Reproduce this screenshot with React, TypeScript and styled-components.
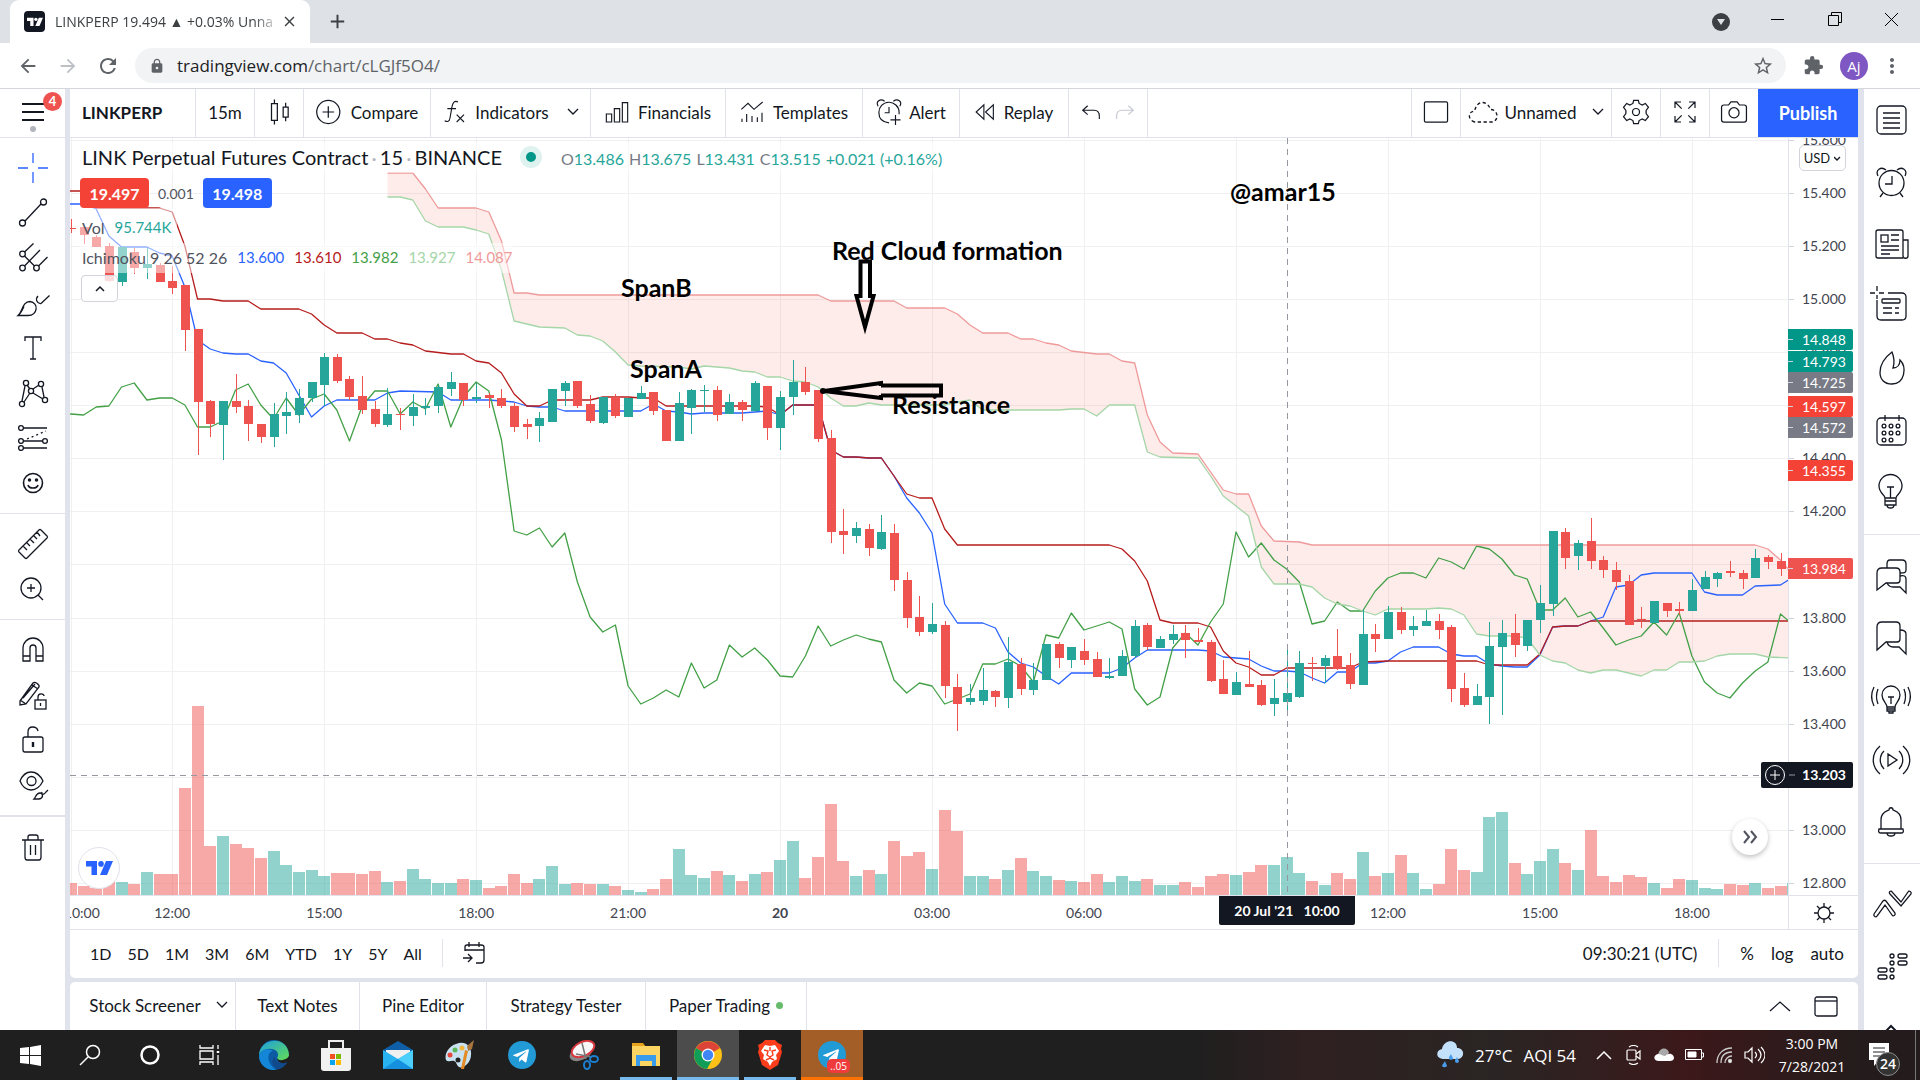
import React from 'react'
import styled, { createGlobalStyle } from 'styled-components'
import {
  MdAdd,
  MdArrowBack,
  MdArrowForward,
  MdClose,
  MdExtension,
  MdLock,
  MdMoreVert,
  MdRefresh,
  MdStarBorder,
} from 'react-icons/md'
import { FaTelegramPlane } from 'react-icons/fa'

const UI_FONT = "Lato, 'Open Sans', sans-serif"
const SYSTEM_FONT = "'Open Sans', 'Noto Sans', sans-serif"

const GlobalStyle = createGlobalStyle`
  * {
    box-sizing: border-box;
  }
  body {
    margin: 0;
    overflow: hidden;
    font-family: ${UI_FONT};
    color: #131722;
  }
  button {
    font: inherit;
    color: inherit;
    background: none;
    border: none;
    padding: 0;
    cursor: pointer;
  }
  svg {
    display: block;
    flex: none;
  }
`

/* ---------- chart data ---------- */

// [up, high, body top, body bottom, low, volume top], one row per 15 minutes
type Candle = [number, number, number, number, number, number]

const FIRST = -8
const CANDLES: Candle[] = [
  [0, 219, 228, 229, 233, 883],
  [0, 227, 227, 235, 244, 886],
  [0, 235, 237, 247, 247, 888],
  [0, 243, 246, 281, 282, 881],
  [1, 246, 247, 282, 286, 882],
  [0, 248, 252, 268, 274, 884],
  [1, 248, 264, 268, 279, 872],
  [0, 263, 265, 282, 282, 874],
  [0, 266, 281, 288, 294, 874],
  [0, 285, 285, 330, 351, 788],
  [0, 329, 329, 402, 455, 706],
  [0, 400, 401, 424, 437, 846],
  [1, 401, 401, 425, 460, 836],
  [0, 374, 401, 407, 413, 844],
  [0, 400, 406, 424, 441, 848],
  [0, 424, 424, 437, 443, 858],
  [1, 403, 414, 437, 447, 851],
  [1, 392, 412, 416, 434, 865],
  [1, 389, 398, 415, 423, 872],
  [1, 382, 382, 398, 402, 870],
  [1, 353, 357, 385, 406, 876],
  [0, 354, 357, 381, 383, 873],
  [0, 376, 379, 397, 400, 873],
  [0, 376, 396, 410, 414, 874],
  [0, 401, 409, 424, 427, 871],
  [1, 388, 414, 425, 427, 882],
  [0, 408, 414, 415, 430, 881],
  [1, 394, 407, 416, 426, 869],
  [1, 398, 406, 408, 415, 879],
  [1, 385, 387, 406, 413, 883],
  [1, 372, 382, 389, 396, 883],
  [0, 383, 383, 400, 406, 879],
  [1, 383, 397, 399, 403, 880],
  [0, 393, 395, 398, 408, 888],
  [0, 389, 398, 406, 408, 886],
  [0, 403, 406, 427, 432, 874],
  [0, 419, 424, 427, 439, 883],
  [1, 412, 418, 426, 442, 879],
  [1, 389, 389, 422, 422, 866],
  [1, 381, 383, 391, 406, 884],
  [0, 381, 381, 406, 408, 883],
  [0, 395, 404, 421, 423, 884],
  [1, 397, 397, 423, 424, 884],
  [0, 394, 397, 416, 418, 886],
  [1, 398, 398, 417, 417, 890],
  [1, 386, 393, 399, 399, 892],
  [0, 392, 392, 411, 415, 889],
  [0, 410, 410, 441, 441, 879],
  [1, 392, 403, 441, 441, 849],
  [1, 389, 390, 408, 434, 875],
  [1, 385, 390, 391, 412, 878],
  [0, 386, 390, 415, 421, 871],
  [1, 394, 402, 414, 414, 875],
  [0, 400, 402, 410, 421, 881],
  [1, 381, 383, 411, 412, 874],
  [0, 386, 386, 428, 440, 872],
  [1, 391, 397, 428, 450, 860],
  [1, 360, 382, 397, 415, 841],
  [0, 367, 382, 392, 395, 878],
  [0, 390, 390, 439, 442, 857],
  [0, 430, 438, 532, 543, 804],
  [0, 509, 531, 535, 554, 861],
  [1, 522, 528, 536, 543, 876],
  [0, 524, 529, 548, 556, 870],
  [1, 515, 532, 549, 550, 874],
  [0, 524, 533, 580, 591, 841],
  [0, 572, 580, 618, 628, 856],
  [0, 596, 617, 632, 636, 852],
  [1, 603, 624, 632, 634, 869],
  [0, 621, 625, 686, 698, 810],
  [0, 674, 687, 704, 731, 831],
  [1, 684, 698, 702, 705, 876],
  [1, 668, 690, 701, 705, 876],
  [0, 690, 691, 697, 707, 879],
  [1, 637, 662, 698, 708, 870],
  [0, 658, 664, 689, 695, 858],
  [1, 663, 680, 690, 695, 871],
  [1, 644, 644, 680, 680, 876],
  [0, 642, 644, 658, 668, 880],
  [1, 647, 647, 660, 668, 881],
  [0, 639, 651, 660, 665, 882],
  [0, 652, 659, 677, 677, 874],
  [1, 658, 676, 678, 679, 882],
  [1, 650, 656, 676, 676, 876],
  [1, 620, 626, 656, 658, 881],
  [0, 623, 625, 647, 650, 879],
  [1, 636, 639, 648, 648, 885],
  [1, 625, 634, 640, 644, 885],
  [0, 625, 633, 640, 658, 882],
  [0, 628, 640, 642, 642, 887],
  [0, 640, 642, 681, 682, 876],
  [0, 660, 679, 694, 694, 874],
  [1, 672, 682, 695, 695, 875],
  [0, 651, 684, 687, 687, 872],
  [0, 680, 685, 705, 706, 865],
  [1, 679, 698, 704, 716, 865],
  [1, 650, 693, 702, 716, 857],
  [1, 651, 663, 697, 698, 873],
  [0, 657, 663, 664, 681, 881],
  [1, 655, 658, 666, 683, 885],
  [0, 629, 656, 669, 670, 873],
  [0, 653, 665, 684, 689, 879],
  [1, 609, 634, 685, 685, 852],
  [0, 624, 634, 639, 652, 876],
  [1, 606, 612, 639, 639, 873],
  [0, 607, 612, 630, 634, 855],
  [1, 616, 626, 630, 636, 873],
  [1, 610, 621, 626, 626, 889],
  [0, 614, 621, 630, 639, 884],
  [0, 625, 627, 689, 702, 849],
  [0, 673, 688, 705, 707, 870],
  [1, 684, 696, 705, 705, 872],
  [1, 622, 646, 697, 724, 817],
  [1, 620, 633, 647, 715, 812],
  [0, 614, 633, 645, 657, 863],
  [1, 620, 620, 646, 651, 874],
  [1, 585, 603, 620, 633, 861],
  [1, 531, 531, 604, 616, 849],
  [0, 528, 532, 558, 569, 863],
  [1, 540, 543, 556, 570, 870],
  [0, 518, 541, 561, 569, 830],
  [0, 556, 560, 570, 578, 876],
  [0, 562, 570, 582, 590, 882],
  [0, 575, 581, 625, 625, 875],
  [0, 607, 619, 620, 628, 877],
  [1, 601, 601, 623, 623, 883],
  [0, 603, 603, 611, 617, 888],
  [0, 602, 609, 611, 615, 879],
  [1, 579, 590, 611, 611, 880],
  [1, 571, 577, 589, 589, 888],
  [1, 572, 573, 579, 587, 889],
  [0, 561, 571, 573, 577, 884],
  [0, 570, 573, 579, 589, 885],
  [1, 549, 558, 578, 578, 883],
  [0, 555, 557, 562, 569, 888],
  [0, 553, 561, 569, 576, 886],
]

// indicator lines as "index,y" pairs
const LAGGING =
  '-9,415 -8,414 -7,415 -6,407 -5,406 -4,387 -3,383 -2,400 -1,398 0,398 1,405 2,427 3,427 4,421 5,390 6,384 7,405 8,419 9,398 10,415 11,399 12,394 13,410 14,441 15,406 16,391 17,391 18,414 19,402 20,409 21,384 22,427 23,397 24,382 25,391 26,440 27,531 28,535 29,528 30,547 31,533 32,582 33,617 34,632 35,625 36,686 37,704 38,698 39,690 40,697 41,663 42,688 43,680 44,645 45,657 46,648 47,660 48,676 49,677 50,656 51,626 52,646 53,640 54,635 55,639 56,642 57,680 58,693 59,683 60,686 61,704 62,699 63,694 64,664 65,664 66,659 67,666 68,682 69,635 70,638 71,613 72,630 73,626 74,622 75,629 76,689 77,705 78,697 79,648 80,633 81,645 82,622 83,604 84,532 85,557 86,543 87,560 88,569 89,582 90,624 91,621 92,602 93,611 94,611 95,591 96,578 97,573 98,573 99,578 100,558 101,562 102,569 103,546 104,549 105,559 106,575 107,579 108,610 109,610 110,598 111,617 112,612 113,628 114,645 115,640 116,636 117,622 118,635 119,613 120,656 121,682 122,693 123,698 124,683 125,671 126,662 127,614 128,625'
const CONVERSION =
  '-9,204 -7,204 -6,209 -5,236 -4,247 -2,247 -1,253 0,256 1,287 2,340 3,349 4,353 5,354 6,354 7,361 8,363 9,373 10,395 11,417 12,406 13,400 16,400 17,393 18,391 21,392 22,400 25,400 26,401 27,402 28,406 29,407 30,407 31,411 37,411 38,404 39,411 40,412 41,414 42,413 45,413 46,412 47,411 48,415 49,405 51,405 52,450 53,457 54,457 55,458 56,458 57,476 58,498 59,513 60,533 61,604 62,623 64,623 65,628 66,652 67,663 68,667 69,676 70,684 71,673 74,673 75,668 76,658 77,650 81,650 82,651 83,657 84,658 85,659 86,666 87,671 88,671 89,672 90,678 91,683 92,672 93,672 94,663 95,663 96,661 97,652 98,647 100,647 101,654 102,656 103,656 104,664 105,666 106,667 107,667 108,655 109,627 110,626 111,626 112,621 113,617 114,587 115,585 116,575 117,573 120,573 121,592 122,595 124,595 125,586 127,585 128,577'
const BASE =
  '-9,191 -7,191 -6,208 -1,208 0,212 1,246 2,299 3,299 4,301 6,301 7,309 10,309 11,314 12,325 13,333 15,333 16,339 17,339 18,343 19,345 20,351 22,354 23,354 24,361 25,363 26,373 27,394 28,406 29,406 30,400 33,400 34,397 36,397 37,398 38,398 39,406 46,406 47,407 48,415 49,405 51,405 52,450 53,457 54,457 55,458 56,458 57,476 58,494 59,498 60,498 61,529 62,545 74,545 75,549 76,561 77,581 78,620 79,623 81,623 82,627 83,651 84,663 85,667 86,675 87,675 88,668 93,668 94,662 96,661 103,661 104,665 107,665 108,654 109,627 110,626 111,626 112,621 128,621'
const SPAN_B =
  '17,173 19,173 20,189 21,208 24,208 25,212 26,241 27,293 28,293 29,295 51,295 52,301 57,301 58,308 61,308 62,314 63,325 64,333 66,333 67,339 68,339 69,343 70,345 71,351 73,354 74,354 75,361 76,363 77,415 78,442 79,453 81,454 82,472 83,490 84,494 85,494 86,526 87,541 89,542 90,545 125,545 126,549 127,560 128,575'
const SPAN_A =
  '17,197 18,197 19,200 20,221 21,227 23,227 24,230 25,234 26,270 27,321 28,324 29,327 31,328 32,335 33,336 34,341 35,352 36,365 37,366 40,367 41,369 42,366 44,368 45,371 46,372 47,377 48,377 49,381 50,382 51,387 52,398 53,406 54,406 55,403 56,405 61,405 62,402 63,400 64,410 70,410 71,409 72,409 73,416 74,405 76,405 77,452 78,457 81,458 82,476 83,496 84,506 85,516 86,567 87,584 89,584 90,587 91,598 92,604 93,606 94,611 95,615 96,609 99,609 100,608 101,609 102,615 103,634 104,636 106,636 107,638 108,655 109,661 110,663 111,670 112,673 113,670 114,670 115,673 116,676 117,670 118,670 119,662 120,662 121,661 122,656 123,654 125,654 126,657 128,658'

const PLOT = { left: 70, top: 138, width: 1718, height: 757 }
const barX = (i: number) => 172.2 + 12.664 * i
const priceY = (p: number) => 193.2 + (15.4 - p) * 265.2
const topPct = (y: number) => `${((y - PLOT.top) / PLOT.height) * 100}%`
const leftPct = (x: number) => `${((x - PLOT.left) / PLOT.width) * 100}%`

const toPoints = (s: string) =>
  s
    .split(' ')
    .map((pair) => {
      const [i, y] = pair.split(',').map(Number)
      return `${barX(i).toFixed(1)},${y}`
    })
    .join(' ')

const PRICES = Array.from({ length: 15 }, (_, i) => (15.6 - i * 0.2).toFixed(3))
// prices whose label sits behind a tag
const COVERED = ['14.600', '14.000', '13.200']
const TIMES: [number, string][] = [
  [-8, '10:00'],
  [0, '12:00'],
  [12, '15:00'],
  [24, '18:00'],
  [36, '21:00'],
  [48, '20'],
  [60, '03:00'],
  [72, '06:00'],
  [84, ''],
  [96, '12:00'],
  [108, '15:00'],
  [120, '18:00'],
]
const TAGS: [string, number, string][] = [
  ['14.848', 339, '#009688'],
  ['14.793', 361, '#009688'],
  ['14.725', 382, '#787b86'],
  ['14.597', 406, '#f44336'],
  ['14.572', 427, '#787b86'],
  ['14.355', 470, '#f44336'],
  ['13.984', 568, '#ef5350'],
]

/* ---------- icons ---------- */

const Icon = ({ children, size = 36, color = '#131722', width = 1.3 }: any) => (
  <svg
    width={size}
    height={size}
    viewBox="0 0 36 36"
    fill="none"
    stroke={color}
    strokeWidth={width}
    aria-hidden="true"
  >
    {children}
  </svg>
)

const Chevron = () => (
  <svg width="12" height="8" viewBox="0 0 12 8" fill="none" stroke="#131722" strokeWidth="1.3">
    <path d="M1 1l5 5 5-5" />
  </svg>
)

const TVMark = ({ color, w = 27 }: { color: string; w?: number }) => (
  <svg width={w} height={w * 0.6} viewBox="0 0 27 16" fill={color}>
    <path d="M0 1h11v14H5.5V6.5H0z" />
    <circle cx="15" cy="3.8" r="2.8" />
    <path d="M20 1h7l-6 14h-7z" />
  </svg>
)

type IconSet = Record<string, React.ReactNode>

const DRAW_TOOLS: IconSet = {
  Crosshair: <path stroke="#2962ff" d="M3 18h10M23 18h10M18 3v10M18 22v11" />,
  'Trend line': (
    <>
      <circle cx="7.5" cy="28" r="3" />
      <circle cx="28.5" cy="7" r="3" />
      <path d="M10 26L26 9" />
    </>
  ),
  Pitchfork: (
    <>
      <circle cx="7.5" cy="14" r="2.8" />
      <circle cx="7.5" cy="28" r="2.8" />
      <circle cx="21.5" cy="28" r="2.8" />
      <path d="M9.500 12l9-8.500M9.500 26L25 10M23.500 26l9-9M9.500 16l10 10" />
    </>
  ),
  Brush: (
    <>
      <path d="M3 30.500c5-4 4-14 12-14 9 1 8 14-2 14zM3 30.500c3-2 4-5 6-9" />
      <path d="M23 11c-3 3-1 8 3 7.500M26 18.500l8.500-8" />
    </>
  ),
  Text: <path d="M18 7v22M10 11V7h16v4M15 29h6" />,
  Patterns: (
    <>
      <circle cx="11" cy="8" r="2.6" />
      <circle cx="26" cy="9" r="2.6" />
      <circle cx="16" cy="16" r="2.6" />
      <circle cx="7" cy="29" r="2.6" />
      <circle cx="30" cy="25" r="2.6" />
      <path d="M10 11L7 26M12 10l3 4M18 14l6-4M27 12l2 10M15 18L9 27M18 18l10 6" />
    </>
  ),
  Forecast: (
    <>
      <circle cx="6" cy="8" r="2.4" />
      <circle cx="6" cy="21" r="2.4" />
      <circle cx="30" cy="21" r="2.4" />
      <circle cx="6" cy="28" r="2.4" />
      <path d="M9 8h23M9 21h18M9 28h23" />
      <path d="M12 19L31 11" strokeDasharray="2 3" />
    </>
  ),
  Icons: (
    <>
      <circle cx="18" cy="18" r="9.5" strokeWidth="1.6" />
      <circle cx="14.5" cy="15" r="1.1" fill="#131722" />
      <circle cx="21.5" cy="15" r="1.1" fill="#131722" />
      <path d="M13 20c1 4 9 4 10 0" strokeWidth="1.6" />
    </>
  ),
}

const MEASURE_TOOLS: IconSet = {
  Measure: (
    <path d="M26 4l6 6c1 1 1 1 0 2L12 32c-1 1-1 1-2 0l-6-6c-1-1-1-1 0-2L24 4c1-1 1-1 2 0zM8 20l4 4M12 17l3 3M15 13l4 4M19 10l3 3M22 6l3 4" />
  ),
  'Zoom in': (
    <>
      <circle cx="16" cy="17" r="10" />
      <path d="M23 24l5 5M16 13v8M12 17h8" />
    </>
  ),
}

const LOCK_TOOLS: IconSet = {
  Magnet: <path d="M8 29V16a10 10 0 0 1 20 0v13h-7V16a3 3 0 0 0-6 0v13zM8 24h7M21 24h7" />,
  'Stay in drawing mode': (
    <>
      <path d="M5 24L18 6c2-2 7 2 6 4L11 27l-6 1zM5 23l6 4M8 21L20 7M17 8l6 4" />
      <rect x="20" y="23" width="11" height="9" />
      <path d="M23 23v-3c0-4 6-4 6-1M25.5 26v3" />
    </>
  ),
  'Lock all': (
    <>
      <rect x="8" y="15" width="20" height="15" rx="2" />
      <path d="M13 15v-5c0-7 9-6 10-1" />
      <path d="M18 20v5" strokeWidth="2.4" />
    </>
  ),
  'Hide all': (
    <>
      <path d="M5 14c5-12 17-12 23 0-6 12-18 12-23 0z" />
      <circle cx="16.5" cy="14" r="4.5" />
      <path d="M19 32c2-2 2-6 6-6 3 0 4 5-1 6zM27 25c-1 3 2 3 4 0l2-2" />
    </>
  ),
}

const TRASH = (
  <path d="M7 11h22M10 11v17c0 2 1 3 2 3h12c1 0 2-1 2-3V11M13 11V8c0-1 1-2 2-2h6c1 0 2 1 2 2v3M15.5 16v10M20.5 16v10" />
)

const BULB = (
  <>
    <path d="M14 27c0-4-5-6-5-12a9 9 0 0 1 18 0c0 6-5 8-5 12zM14 27v4h8v-4M14 29h8M16 31v2h4v-2" />
    <path d="M15 17h6M18 17v7" />
  </>
)

const SIDE_TOP: IconSet = {
  Watchlist: (
    <>
      <rect x="4" y="4" width="29" height="28" rx="4" />
      <path d="M10 11h17M10 16h17M10 21h17M10 26h17" />
    </>
  ),
  Alerts: (
    <>
      <circle cx="18.5" cy="19" r="12.5" />
      <path d="M19 12v8h-7M10 29l-3 4M27 29l3 4M5 12c-3-6 3-10 8-6M32 12c3-6-3-10-8-6" />
    </>
  ),
  News: (
    <>
      <path d="M30 32H5c-1 0-2-1-2-2V6c0-1 1-2 2-2h23c1 0 2 1 2 2v24c0 3 5 3 5 0V14h-5" />
      <rect x="8" y="9" width="7" height="7" />
      <path d="M18 9h8M18 14h8M8 20h18M8 24h18M8 28h9" />
    </>
  ),
  'Data window': (
    <>
      <path d="M4 12v16c0 3 2 4 4 4h21c2 0 4-1 4-4V9c0-3-2-4-4-4H15M4-2v5M4 7v4M-3 5h5M6 5h5" />
      <rect x="9" y="11" width="18" height="4" rx="1" />
      <path d="M10 20h9M22 20h4M10 25h9M22 25h4" />
    </>
  ),
  Hotlists: (
    <path d="M19 2c2 5 3 10 1 16 4 0 7-3 7-8 7 7 5 24-8 24C3 34 3 14 19 2z" />
  ),
  Calendar: (
    <>
      <rect x="4" y="6" width="29" height="27" rx="4" />
      <path d="M12 3v6M26 3v6" />
      {[14, 21, 28].map((y) =>
        [11, 18, 25].map((x) =>
          x === 25 && y === 28 ? null : <circle key={`${x}${y}`} cx={x} cy={y} r="1.9" />,
        ),
      )}
    </>
  ),
  Ideas: (
    <>
      <path d="M12 24c0-3-6-5-6-12a11 11 0 0 1 23 0c0 7-6 9-6 12zM12 24v7h11v-7M12 27h11M14 31c0 4 7 4 7 0" />
      <path d="M14 13h7M17.5 13v11" />
    </>
  ),
}

const SIDE_MIDDLE: IconSet = {
  'Public chats': (
    <>
      <path d="M9 12h14c3 0 4 1 4 4v8c0 2-1 3-3 3H13l-9 7V17c0-3 2-5 5-5z" />
      <path d="M14 12V8c0-3 1-4 3-4h12c3 0 4 2 4 4v6c0 3-2 3-6 3M27 20c4-1 6 0 6 3v14l-6-6h-7c-3 0-5-2-6-4" />
    </>
  ),
  'Private chats': (
    <>
      <path d="M9 4h14c3 0 4 2 4 4v13c0 2-1 3-3 3H13l-9 8V9c0-3 2-5 5-5z" />
      <path d="M27 12c4 0 6 1 6 4v20l-7-7h-6c-3 0-5-2-6-5" />
    </>
  ),
  'Ideas stream': (
    <>
      {BULB}
      <path d="M5 9c-2 5-2 10 0 15M1 7c-3 6-3 13 0 19M31 9c2 5 2 10 0 15M35 7c3 6 3 13 0 19" />
    </>
  ),
  Streams: (
    <path d="M15 12v12l9-6zM11 9c-5 5-5 13 0 18M7 4c-9 8-9 20 0 28M26 9c5 5 5 13 0 18M30 4c9 8 9 20 0 28" />
  ),
  Notifications: (
    <path d="M8 25V16c0-8 6-9 8-10 0-3 4-3 4 0 2 1 8 2 8 10v9M6 25h24c1 3 0 4-2 4H8c-2 0-3-1-2-4zM14 29c0 4 8 4 8 0" />
  ),
}

const SIDE_BOTTOM: IconSet = {
  'Order panel': (
    <path d="M1 28l9-13c1-1 2-1 3 0l9 12c1 2-2 4-3 2l-7-10-8 11c-1 2-4 0-3-2zM17 8c-2-2 1-4 2-2l9 10 7-10c1-2 4 0 3 2L28 20z" />
  ),
  DOM: (
    <>
      {[8, 15, 22, 29].map((y) => (
        <circle key={y} cx="19" cy={y} r="2" />
      ))}
      <rect x="25" y="6" width="9" height="4" rx="2" />
      <rect x="25" y="13" width="9" height="4" rx="2" />
      <rect x="5" y="20" width="9" height="4" rx="2" />
      <rect x="5" y="27" width="9" height="4" rx="2" />
    </>
  ),
  More: <path d="M12 22l6-6 6 6" strokeWidth="2" />,
}

/* ---------- browser chrome ---------- */

const Page = styled.div`
  display: flex;
  flex-direction: column;
  height: 100vh;
`

const TabStrip = styled.header`
  display: flex;
  height: 43px;
  padding-left: 10px;
  background: #dee1e6;
  font-family: ${SYSTEM_FONT};
`

const Tab = styled.div`
  display: flex;
  align-items: center;
  width: 300px;
  padding: 0 12px 0 14px;
  border-radius: 9px 9px 0 0;
  background: #fff;
  color: #3c4043;
`

const Favicon = styled.span`
  display: grid;
  place-items: center;
  width: 21px;
  height: 21px;
  margin-right: 10px;
  border-radius: 4px;
  background: #131722;
`

const TabTitle = styled.span`
  flex: 1;
  overflow: hidden;
  white-space: nowrap;
  font-size: 14px;
  -webkit-mask-image: linear-gradient(90deg, #000 88%, transparent);
`

const NewTab = styled.button`
  width: 55px;
  display: grid;
  place-items: center;
  color: #3c4043;
`

const WindowButtons = styled.div`
  display: flex;
  margin-left: auto;
  align-items: flex-start;
`

const WindowButton = styled.button`
  display: grid;
  place-items: center;
  width: 57px;
  height: 38px;
`

const AddressBar = styled.div`
  display: flex;
  align-items: center;
  height: 46px;
  padding: 0 16px;
  border-bottom: 1px solid #d5d7dc;
  background: #fff;
  color: #5f6368;
`

const NavButton = styled.button<{ $w: number; $faded?: boolean }>`
  display: grid;
  place-items: center;
  width: ${(p) => p.$w}px;
  height: 35px;
  color: ${(p) => (p.$faded ? '#bdc1c6' : '#5f6368')};
`

const Omnibox = styled.div`
  display: flex;
  flex: 1;
  align-items: center;
  gap: 12px;
  height: 35px;
  margin: 0 10px 0 15px;
  padding: 0 12px 0 14px;
  border-radius: 18px;
  background: #f1f3f4;
`

const UrlField = styled.div`
  flex: 1;
  font-family: ${SYSTEM_FONT};
  font-size: 17px;

  b {
    font-weight: 400;
    color: #202124;
  }
`

const Avatar = styled.button`
  width: 28px;
  height: 28px;
  margin: 0 12px 0 10px;
  border-radius: 50%;
  background: #7e57c2;
  font-family: ${SYSTEM_FONT};
  font-size: 15px;
  color: #fff;
`

/* ---------- workspace ---------- */

const Workspace = styled.div`
  display: flex;
  flex: 1;
  min-height: 0;
  background: #e0e3eb;
`

const LeftBar = styled.nav`
  display: flex;
  flex-direction: column;
  width: 65px;
  margin-right: 5px;
  background: #fff;
`

const MenuButton = styled.button`
  position: relative;
  display: grid;
  place-items: center;
  height: 49px;
  border-bottom: 1px solid #e0e3eb;
`

const Badge = styled.span`
  position: absolute;
  top: 3px;
  right: 3px;
  width: 19px;
  height: 19px;
  border-radius: 50%;
  background: #ef5350;
  font-size: 13px;
  line-height: 19px;
  font-weight: 700;
  color: #fff;
`

const ToolGroup = styled.div`
  display: flex;
  flex-direction: column;
  padding: 7px 0 8px;
  border-bottom: 1px solid #e0e3eb;

  &:last-child {
    flex: 1;
    border-top: 1px solid #e0e3eb;
    border-bottom: none;
  }
`

const ToolButton = styled.button`
  display: grid;
  place-items: center;
  height: 45px;
`

const Center = styled.main`
  display: flex;
  flex: 1;
  flex-direction: column;
  min-width: 0;
`

const TopBar = styled.div`
  display: flex;
  height: 49px;
  border-bottom: 1px solid #e0e3eb;
  background: #fff;
`

const TopButton = styled.button<{ $w: number; $gap?: number }>`
  display: flex;
  align-items: center;
  justify-content: center;
  gap: ${(p) => p.$gap ?? 9}px;
  width: ${(p) => p.$w}px;
  padding-bottom: 2px;
  border-right: 1px solid #e0e3eb;
  font-size: 17px;
  white-space: nowrap;
`

const SymbolButton = styled(TopButton)`
  justify-content: flex-start;
  padding-left: 12px;
  font-weight: 700;
`

const SnapshotButton = styled(TopButton)`
  border-right: none;
`

const DropArrow = styled.span`
  margin-left: 9px;
`

const TopSpacer = styled.div`
  flex: 1;
  border-right: 1px solid #e0e3eb;
`

const UndoGroup = styled.div`
  display: flex;
  align-items: center;
  justify-content: center;
  gap: 14px;
  width: 79px;
  border-right: 1px solid #e0e3eb;
`

const PublishButton = styled.button`
  width: 100px;
  height: 48px;
  background: #2962ff;
  font-size: 18px;
  font-weight: 700;
  color: #fff;
`

const ChartGrid = styled.section`
  display: grid;
  flex: 1;
  grid-template-columns: 1fr 70px;
  grid-template-rows: 1fr 35px;
  min-height: 0;
  background: #fff;
`

const Plot = styled.div`
  position: relative;
  overflow: hidden;
`

const PlotSvg = styled.svg`
  position: absolute;
  inset: 0;
  width: 100%;
  height: 100%;
`

const Legend = styled.div`
  position: absolute;
  top: 5px;
  left: 10px;
  display: flex;
  flex-direction: column;
  align-items: flex-start;
`

const LegendRow = styled.div`
  display: flex;
  align-items: center;
  gap: 10px;
  height: 30px;
  padding: 0 0 2px 2px;
  background: rgba(255, 255, 255, 0.5);
  font-size: 15px;
  white-space: nowrap;
  color: #50535e;
`

const TitleRow = styled(LegendRow)`
  gap: 0;
`

const VolumeRow = styled(LegendRow)`
  height: 35px;
  padding: 5px 6px 2px 2px;
`

const StudyName = styled.span`
  font-size: 16px;
`

const SeriesTitle = styled.h1`
  margin: 0;
  font-size: 20px;
  font-weight: 400;
  color: #131722;

  i {
    margin: 0 -2px;
    font-style: normal;
    color: #b2b5be;
  }
`

const StatusDot = styled.span`
  width: 22px;
  height: 22px;
  margin: 0 19px 0 18px;
  border: 6px solid #def2f0;
  border-radius: 50%;
  background: #009688;
`

const Ohlc = styled.span`
  display: flex;
  gap: 5px;
  padding-top: 2px;
  font-size: 16px;
  color: #26a69a;

  i {
    font-style: normal;
    color: #787b86;
  }
`

const TradeRow = styled.div`
  display: flex;
  align-items: center;
  gap: 9px;
  margin-top: 5px;
  font-size: 14px;
  color: #50535e;
`

const TradeButton = styled.button<{ $bg: string }>`
  width: 69px;
  height: 30px;
  border-radius: 4px;
  background: ${(p) => p.$bg};
  font-size: 16px;
  font-weight: 700;
  color: #fff;
`

const Value = styled.span<{ $c: string }>`
  color: ${(p) => p.$c};
`

const CollapseButton = styled.button`
  display: grid;
  place-items: center;
  width: 37px;
  height: 27px;
  margin: 2px 0 0 1px;
  border: 1px solid #d1d4dc;
  border-radius: 4px;
  background: rgba(255, 255, 255, 0.8);
`

const Note = styled.span<{ $x: number; $y: number }>`
  position: absolute;
  left: ${(p) => p.$x}px;
  top: ${(p) => p.$y}px;
  font-size: 25px;
  line-height: 30px;
  font-weight: 700;
  white-space: nowrap;
  color: #000;
`

const RoundButton = styled.button`
  position: absolute;
  display: grid;
  place-items: center;
  border-radius: 50%;
  background: #fff;
`

const LogoButton = styled(RoundButton)`
  left: 8px;
  bottom: 6px;
  width: 42px;
  height: 42px;
  border: 1px solid #e0e3eb;
`

const ScrollButton = styled(RoundButton)`
  right: 20px;
  bottom: 40px;
  width: 36px;
  height: 36px;
  box-shadow: 0 2px 5px rgba(0, 0, 0, 0.25);
`

const PriceAxis = styled.div`
  position: relative;
  border-left: 1px solid #e0e3eb;
  font-size: 14px;
`

const PriceClip = styled.div`
  position: absolute;
  inset: 0;
  overflow: hidden;
`

const AxisLabel = styled.span`
  position: absolute;
  left: 0;
  padding-left: 13px;
  line-height: 20px;
  margin-top: -10px;
  color: #42454f;

  &::before {
    content: '';
    position: absolute;
    left: 0;
    top: 10px;
    width: 5px;
    height: 1px;
    background: #d1d4dc;
  }
`

const PriceTag = styled(AxisLabel)<{ $bg: string }>`
  left: -1px;
  width: 65px;
  padding-left: 14px;
  line-height: 21px;
  border-radius: 0 2px 2px 0;
  background: ${(p) => p.$bg};
  color: #fff;
`

const CrossPrice = styled.div`
  position: absolute;
  right: 5px;
  display: flex;
  align-items: center;
  gap: 3px;
  width: 92px;
  height: 26px;
  padding: 0 7px 0 3px;
  margin-top: -13px;
  border-radius: 2px;
  background: #131722;
  color: #fff;

  span {
    flex: 1;
    text-align: right;
    font-weight: 700;
  }
`

const CurrencyButton = styled.button`
  position: absolute;
  top: 7px;
  left: 10px;
  display: flex;
  align-items: center;
  justify-content: center;
  gap: 4px;
  width: 47px;
  height: 26px;
  border: 1px solid #d1d4dc;
  border-radius: 5px;
  background: #fff;
  font-size: 13px;
`

const TimeAxis = styled.div`
  position: relative;
  border-top: 1px solid #e0e3eb;
  border-bottom: 1px solid #e0e3eb;
  overflow: hidden;
  font-size: 14px;
`

const TimeLabel = styled.span<{ $bold?: boolean }>`
  position: absolute;
  top: 7px;
  width: 60px;
  margin-left: -30px;
  line-height: 20px;
  text-align: center;
  font-weight: ${(p) => (p.$bold ? 700 : 400)};
  color: #42454f;
`

const CrossTime = styled.span`
  position: absolute;
  top: -1px;
  width: 136px;
  margin-left: -68px;
  border-radius: 0 0 2px 2px;
  background: #131722;
  line-height: 32px;
  height: 30px;
  text-align: center;
  white-space: pre;
  font-weight: 700;
  color: #fff;
`

const AxisCorner = styled.button`
  display: grid;
  place-items: center;
  border: 1px solid #e0e3eb;
  border-right: none;
`

const RangeBar = styled.div`
  display: flex;
  align-items: center;
  justify-content: space-between;
  height: 48px;
  padding: 0 14px 0 20px;
  border-radius: 0 0 5px 5px;
  background: #fff;
`

const RangeGroup = styled.div<{ $gap: number; $size: number }>`
  display: flex;
  align-items: center;
  gap: ${(p) => p.$gap}px;
  padding-bottom: 2px;
  font-size: ${(p) => p.$size}px;
`

const Divider = styled.span`
  width: 1px;
  height: 28px;
  margin: 0 4px;
  background: #e0e3eb;
`

const PanelTabs = styled.div`
  display: flex;
  height: 48px;
  margin-top: 4px;
  border-radius: 5px 5px 0 0;
  background: #fff;
  font-size: 17px;
`

const PanelTab = styled.button<{ $w: number; $menu?: boolean }>`
  display: flex;
  align-items: center;
  justify-content: center;
  gap: ${(p) => (p.$menu ? 15 : 13)}px;
  width: ${(p) => p.$w}px;
  padding: ${(p) => (p.$menu ? '0 0 2px 12px' : '0 0 2px')};
  border-right: 1px solid #e0e3eb;
`

const OnlineDot = styled.span`
  width: 7px;
  height: 7px;
  margin-left: -7px;
  border-radius: 50%;
  background: #66bb6a;
`

const PanelActions = styled.div`
  display: flex;
  align-items: center;
  gap: 23px;
  margin-left: auto;
  padding-right: 20px;
`

const RightBar = styled.nav`
  display: flex;
  flex-direction: column;
  width: 56px;
  margin-left: 6px;
  background: #fff;
  overflow: hidden;
`

const SideGroup = styled.div<{ $pad: string }>`
  display: flex;
  flex: none;
  flex-direction: column;
  padding: ${(p) => p.$pad};
  border-bottom: 1px solid #e0e3eb;
`

const SideButton = styled.button`
  display: grid;
  place-items: center;
  height: 62px;
  padding-right: 2px;

  svg {
    overflow: visible;
  }
`

/* ---------- taskbar ---------- */

const Taskbar = styled.footer`
  display: flex;
  height: 50px;
  background: linear-gradient(90deg, #1f1f1f 62%, #2f2021 68%, #2a2524 78%, #3c181a 88%, #241c1c 97%);
  font-family: ${SYSTEM_FONT};
  color: #fff;
`

const SystemButton = styled.button`
  display: grid;
  place-items: center;
  width: 60px;
`

const Pinned = styled.div`
  display: flex;
  padding-left: 3px;
`

const AppButton = styled.button<{ $line?: string; $bg?: string }>`
  position: relative;
  display: grid;
  place-items: center;
  width: 62px;
  background: ${(p) => p.$bg ?? 'none'};

  &::after {
    content: '';
    position: absolute;
    bottom: 0;
    left: ${(p) => (p.$bg ? 0 : 5)}px;
    right: ${(p) => (p.$bg ? 0 : 5)}px;
    height: 3px;
    background: ${(p) => p.$line ?? 'none'};
  }
`

const CountBadge = styled.span`
  position: absolute;
  right: 13px;
  bottom: 7px;
  padding: 0 3px;
  border-radius: 5px;
  background: #ef3b3b;
  font-size: 10px;
  line-height: 14px;
`

const Tray = styled.div`
  display: flex;
  align-items: center;
  gap: 10px;
  margin-left: auto;
  font-size: 17px;
`

const Weather = styled.button`
  display: flex;
  align-items: center;
  gap: 11px;
  margin-right: 8px;
`

const TrayButton = styled.button`
  display: grid;
  place-items: center;
  width: 20px;
  height: 50px;
`

const Clock = styled.time`
  width: 76px;
  margin-right: 8px;
  font-size: 14px;
  line-height: 23px;
  text-align: center;
`

const ActionCenter = styled.button`
  position: relative;
  width: 37px;
  height: 50px;
  padding-left: 1px;
`

const ActionCount = styled.span`
  position: absolute;
  left: 8px;
  bottom: 4px;
  width: 24px;
  height: 24px;
  border: 1px solid #8b8b8b;
  border-radius: 50%;
  background: #333;
  font-size: 14px;
  line-height: 21px;
  font-weight: 600;
`

const ShowDesktop = styled.button`
  width: 5px;
  height: 50px;
  border-left: 1px solid #777;
`

/* ---------- parts ---------- */

const PriceChart = () => (
  <PlotSvg viewBox="70 138 1718 757" preserveAspectRatio="none" role="img" aria-label="LINKPERP 15m">
    <g stroke="#f0f0f2">
      {PRICES.map((p) => (
        <path key={p} d={`M70 ${Math.round(priceY(Number(p))) + 0.5}H1788`} />
      ))}
      {TIMES.map(([i]) => (
        <path key={i} d={`M${Math.round(barX(i)) + 0.5} 138V895`} />
      ))}
    </g>
    {CANDLES.map(([up, , , , , v], k) => (
      <rect
        key={k}
        x={Math.round(barX(k + FIRST) - 6)}
        y={v}
        width={12}
        height={895 - v}
        fill={up ? '#26a69a' : '#ef5350'}
        opacity={0.5}
      />
    ))}
    <rect x="1787" y="883" width="1" height="12" fill="#26a69a" opacity="0.5" />
    <polygon
      points={`${toPoints(SPAN_B)} ${toPoints(SPAN_A).split(' ').reverse().join(' ')}`}
      fill="#f44336"
      opacity={0.1}
    />
    <g fill="none" strokeWidth="1.3" strokeLinejoin="round">
      <polyline points={toPoints(CONVERSION)} stroke="#2962ff" />
      <polyline points={toPoints(BASE)} stroke="#b71c1c" />
      <polyline points={toPoints(LAGGING)} stroke="#43a047" />
      <polyline points={toPoints(SPAN_A)} stroke="#a5d6a7" />
      <polyline points={toPoints(SPAN_B)} stroke="#ef9a9a" />
    </g>
    {CANDLES.map(([up, h, t, b, l], k) => {
      const x = Math.round(barX(k + FIRST))
      return (
        <g key={k} fill={up ? '#26a69a' : '#ef5350'}>
          <rect x={x} y={h} width={1} height={l - h} />
          <rect x={x - 4} y={t} width={9} height={b - t} />
        </g>
      )
    })}
    <g stroke="#9598a1" strokeDasharray="6 5">
      <path d="M70 775.5H1788" />
      <path d="M1287.5 138V895" />
    </g>
    <g fill="none" stroke="#000" strokeWidth="4">
      <path d="M860.5 298V261.5H870V298M860.5 296h-4L865 327l8.5-31H870" />
      <path d="M881 395.5h60v-10H881M881 386v-3L824 391l57 7v-3" />
    </g>
    <circle cx="823" cy="391" r="3" />
    <ellipse cx="941" cy="245" rx="3" ry="4" />
  </PlotSvg>
)

const ToolButtons = ({ items }: { items: IconSet }) => (
  <ToolGroup>
    {Object.entries(items).map(([name, art]) => (
      <ToolButton key={name} aria-label={name}>
        <Icon>{art}</Icon>
      </ToolButton>
    ))}
  </ToolGroup>
)

const SideButtons = ({ items, pad }: { items: IconSet; pad: string }) => (
  <SideGroup $pad={pad}>
    {Object.entries(items).map(([name, art]) => (
      <SideButton key={name} aria-label={name}>
        <Icon>{art}</Icon>
      </SideButton>
    ))}
  </SideGroup>
)

const Browser = () => (
  <>
    <TabStrip>
      <Tab>
        <Favicon>
          <TVMark color="#fff" w={16} />
        </Favicon>
        <TabTitle>LINKPERP 19.494 ▲ +0.03% Unna</TabTitle>
        <button aria-label="Close tab">
          <MdClose size={17} />
        </button>
      </Tab>
      <NewTab aria-label="New tab">
        <MdAdd size={23} />
      </NewTab>
      <WindowButtons>
        <WindowButton aria-label="Search tabs">
          <svg width="18" height="27" viewBox="0 0 18 27">
            <circle cx="9" cy="16" r="9" fill="#3c4043" />
            <path d="M5 13h8l-4 6z" fill="#dee1e6" />
          </svg>
        </WindowButton>
        <WindowButton aria-label="Minimize">
          <svg width="13" height="13" stroke="#000">
            <path d="M0 6.5h13" />
          </svg>
        </WindowButton>
        <WindowButton aria-label="Restore">
          <svg width="14" height="14" fill="none" stroke="#000">
            <path d="M.5 3.5h10v10H.5zM3.5 3V.5h10v10H11" />
          </svg>
        </WindowButton>
        <WindowButton aria-label="Close">
          <svg width="13" height="13" stroke="#000">
            <path d="M0 0l13 13M13 0L0 13" />
          </svg>
        </WindowButton>
      </WindowButtons>
    </TabStrip>
    <AddressBar>
      <NavButton aria-label="Back" $w={24}>
        <MdArrowBack size={22} />
      </NavButton>
      <NavButton aria-label="Forward" $w={56} $faded>
        <MdArrowForward size={22} />
      </NavButton>
      <NavButton aria-label="Reload" $w={24}>
        <MdRefresh size={24} />
      </NavButton>
      <Omnibox>
        <MdLock size={16} />
        <UrlField>
          <b>tradingview.com</b>/chart/cLGJf5O4/
        </UrlField>
        <MdStarBorder size={22} />
      </Omnibox>
      <NavButton aria-label="Extensions" $w={34}>
        <MdExtension size={21} />
      </NavButton>
      <Avatar>Aj</Avatar>
      <button aria-label="Chrome menu">
        <MdMoreVert size={24} />
      </button>
    </AddressBar>
  </>
)

const Toolbar = () => (
  <TopBar>
    <SymbolButton $w={126}>LINKPERP</SymbolButton>
    <TopButton $w={59}>15m</TopButton>
    <TopButton $w={49} aria-label="Candles">
      <Icon size={30} width={1.5}>
        <path d="M9 8h7v20H9zM12.500 3v5M12.500 28v5M23 12h6v12h-6zM26 7v5M26 24v5" />
      </Icon>
    </TopButton>
    <TopButton $w={127}>
      <Icon size={26} width={1.7}>
        <circle cx="17" cy="18" r="16" />
        <path d="M17 10v16M9 18h16" />
      </Icon>
      Compare
    </TopButton>
    <TopButton $w={160}>
      <Icon size={24} width={1.7}>
        <path d="M24 3c-5-3-8 1-9 7l-3 17c-1 6-4 6-8 4M8 13h13M22 22l11 11M33 22L22 33" />
      </Icon>
      Indicators
      <DropArrow>
        <Chevron />
      </DropArrow>
    </TopButton>
    <TopButton $w={135}>
      <Icon size={24} width={1.7}>
        <path d="M2 21h8v12H2zM14 13h8v20h-8zM26 4h8v29h-8z" />
      </Icon>
      Financials
    </TopButton>
    <TopButton $w={137}>
      <Icon size={24} width={1.7}>
        <path d="M2 14L12 5l9 9L34 3M3 33v-5M10 33V21M18 33V24M26 33v-7M33 33V19" />
      </Icon>
      Templates
    </TopButton>
    <TopButton $w={97} $gap={7}>
      <Icon size={26} width={1.6}>
        <path d="M18 33C7 32 4 26 4 19a14 14 0 0 1 28-1v3M18 11v8h-6M3 10C-1 3 6-1 12 3M33 10c4-7-3-11-9-7M27 22v14M20 29h14" />
      </Icon>
      Alert
    </TopButton>
    <TopButton $w={109}>
      <Icon size={20} width={2}>
        <path d="M16 5v26L2 18zM33 5v26L19 18z" />
      </Icon>
      Replay
    </TopButton>
    <UndoGroup>
      <button aria-label="Undo">
        <Icon size={20} width={2}>
          <path d="M12 5l-9 8 9 8M4 13h20c6 0 9 5 9 11v5" />
        </Icon>
      </button>
      <button aria-label="Redo">
        <Icon size={20} width={2} color="#c5c8d0">
          <path d="M24 5l9 8-9 8M32 13H12c-6 0-9 5-9 11v5" />
        </Icon>
      </button>
    </UndoGroup>
    <TopSpacer />
    <TopButton $w={49} aria-label="Layout">
      <Icon size={26} width={1.7}>
        <rect x="2" y="4" width="32" height="28" rx="2" />
      </Icon>
    </TopButton>
    <TopButton $w={151} $gap={6}>
      <Icon size={30} width={1.6}>
        <path d="M8 30C-1 27 0 17 8 17 10 4 23 3 27 15c9 0 11 13 2 15z" strokeDasharray="4 3" />
      </Icon>
      Unnamed
      <DropArrow>
        <Chevron />
      </DropArrow>
    </TopButton>
    <TopButton $w={49} aria-label="Settings">
      <Icon size={28} width={1.6}>
        <circle cx="18" cy="18" r="4.5" />
        <path d="M15 3h6l1 4 4 2 4-2 4 5-3 4v4l3 4-4 5-4-2-4 2-1 4h-6l-1-4-4-2-4 2-4-5 3-4v-4l-3-4 4-5 4 2 4-2z" />
      </Icon>
    </TopButton>
    <TopButton $w={49} aria-label="Fullscreen">
      <Icon size={24} width={1.8}>
        <path d="M3 12V3h9M24 3h9v9M33 24v9h-9M12 33H3v-9M3 3l10 10M33 3L23 13M33 33L23 23M3 33l10-10" />
      </Icon>
    </TopButton>
    <SnapshotButton $w={48} aria-label="Snapshot">
      <Icon size={28} width={1.6}>
        <path d="M5 9h6l3-4h8l3 4h6c2 0 3 1 3 3v16c0 2-1 3-3 3H5c-2 0-3-1-3-3V12c0-2 1-3 3-3z" />
        <circle cx="18" cy="19" r="6.5" />
      </Icon>
    </SnapshotButton>
    <PublishButton>Publish</PublishButton>
  </TopBar>
)

const Chart = () => (
  <ChartGrid>
    <Plot>
      <PriceChart />
      <Note $x={1160} $y={38}>@amar15</Note>
      <Note $x={762} $y={97}>Red Cloud formation</Note>
      <Note $x={551} $y={134}>SpanB</Note>
      <Note $x={560} $y={215}>SpanA</Note>
      <Note $x={822} $y={251}>Resistance</Note>
      <Legend>
        <TitleRow>
          <SeriesTitle>
            LINK Perpetual Futures Contract <i>·</i> 15 <i>·</i> BINANCE
          </SeriesTitle>
          <StatusDot />
          <Ohlc>
            <span><i>O</i>13.486</span>
            <span><i>H</i>13.675</span>
            <span><i>L</i>13.431</span>
            <span><i>C</i>13.515</span>
            <span>+0.021 (+0.16%)</span>
          </Ohlc>
        </TitleRow>
        <TradeRow>
          <TradeButton $bg="#f44336">19.497</TradeButton>
          0.001
          <TradeButton $bg="#2962ff">19.498</TradeButton>
        </TradeRow>
        <VolumeRow>
          <StudyName>Vol</StudyName>
          <Value $c="#26a69a">95.744K</Value>
        </VolumeRow>
        <LegendRow>
          <StudyName>Ichimoku 9 26 52 26</StudyName>
          <Value $c="#2962ff">13.600</Value>
          <Value $c="#b71c1c">13.610</Value>
          <Value $c="#43a047">13.982</Value>
          <Value $c="#a5d6a7">13.927</Value>
          <Value $c="#ef9a9a">14.087</Value>
        </LegendRow>
        <CollapseButton aria-label="Hide indicators legend">
          <svg width="10" height="7" fill="none" stroke="#131722" strokeWidth="1.5">
            <path d="M1 6l4-4 4 4" />
          </svg>
        </CollapseButton>
      </Legend>
      <LogoButton aria-label="TradingView">
        <TVMark color="#2962ff" />
      </LogoButton>
      <ScrollButton aria-label="Scroll to the most recent bar">
        <svg width="16" height="16" fill="none" stroke="#50535e" strokeWidth="2">
          <path d="M2 2l5 6-5 6M9 2l5 6-5 6" />
        </svg>
      </ScrollButton>
    </Plot>
    <PriceAxis>
      <PriceClip>
        {PRICES.filter((p) => !COVERED.includes(p)).map((p) => (
          <AxisLabel key={p} style={{ top: topPct(priceY(Number(p))) }}>
            {p}
          </AxisLabel>
        ))}
      </PriceClip>
      {TAGS.map(([text, y, color]) => (
        <PriceTag key={text} $bg={color} style={{ top: topPct(y) }}>
          {text}
        </PriceTag>
      ))}
      <CrossPrice style={{ top: topPct(775) }}>
        <svg width="22" height="22" fill="none" stroke="#fff">
          <circle cx="11" cy="11" r="9.5" />
          <path d="M11 6v10M6 11h10" />
        </svg>
        <svg width="6" height="2" stroke="#9598a1">
          <path d="M0 1h6" />
        </svg>
        <span>13.203</span>
      </CrossPrice>
      <CurrencyButton>
        USD
        <svg width="7" height="5" fill="none" stroke="#131722" strokeWidth="1.3">
          <path d="M0 1l3 3 3-3" />
        </svg>
      </CurrencyButton>
    </PriceAxis>
    <TimeAxis>
      {TIMES.map(([i, text]) => (
        <TimeLabel key={i} $bold={text === '20'} style={{ left: leftPct(barX(i) + (i < 0 ? 11 : 0)) }}>
          {text}
        </TimeLabel>
      ))}
      <CrossTime style={{ left: leftPct(1287) }}>{"20 Jul '21   10:00"}</CrossTime>
    </TimeAxis>
    <AxisCorner aria-label="Axis settings">
      <svg width="22" height="22" fill="none" stroke="#131722" strokeWidth="1.3">
        <circle cx="11" cy="11" r="6" />
        <path d="M11 1v4M11 17v4M1 11h4M17 11h4M4 4l3 3M15 15l3 3M4 18l3-3M15 7l3-3" />
      </svg>
    </AxisCorner>
  </ChartGrid>
)

const TaskbarApps = () => (
  <>
    <SystemButton aria-label="Start">
      <svg width="21" height="21" viewBox="0 0 21 21" fill="#fff">
        <path d="M0 3l9-1v8H0zM10 2l11-2v10H10zM0 11h9v8l-9-1zM10 11h11v10l-11-2z" />
      </svg>
    </SystemButton>
    <SystemButton aria-label="Search">
      <svg width="22" height="22" fill="none" stroke="#fff" strokeWidth="1.5">
        <circle cx="14" cy="8" r="6.5" />
        <path d="M9 13l-8 8" />
      </svg>
    </SystemButton>
    <SystemButton aria-label="Cortana">
      <svg width="22" height="22" fill="none" stroke="#fff" strokeWidth="2.5">
        <circle cx="11" cy="11" r="8.5" />
      </svg>
    </SystemButton>
    <SystemButton aria-label="Task view">
      <svg width="22" height="20" fill="none" stroke="#fff" strokeWidth="1.3">
        <path d="M1 0v3h13V0M1 6h13v8H1zM1 20v-3h13v3M19 0v4M19 10v10" />
        <path d="M19 6v2" strokeWidth="2.5" />
      </svg>
    </SystemButton>
    <Pinned>
      <AppButton aria-label="Edge">
        <svg width="30" height="30" viewBox="0 0 30 30">
          <defs>
            <linearGradient id="edgeTop" x1="0" x2="1" y1="0" y2="1">
              <stop offset="0" stopColor="#1b9de2" />
              <stop offset="1" stopColor="#66e04f" />
            </linearGradient>
          </defs>
          <circle cx="15" cy="15" r="15" fill="#0c59a4" />
          <path d="M0 15C1-3 29-5 30 15c0 7-11 8-12 3 3-5-1-9-6-9C6 8 0 12 0 17z" fill="url(#edgeTop)" />
          <path d="M0 16c2-8 11-8 14-5-6 1-7 12 3 19C7 31 0 24 0 16z" fill="#1486d8" />
          <path d="M16 17c0 6 7 8 13 4-2 4-6 7-10 8-7-3-7-9-3-12z" fill="#114a8b" />
          <path d="M18 18c2 4 10 2 12-2v5c-5 4-12 2-12-3z" fill="#1f1f1f" />
        </svg>
      </AppButton>
      <AppButton aria-label="Store">
        <svg width="30" height="32" viewBox="0 0 30 32">
          <path d="M8 10V2h14v8" fill="none" stroke="#eee" strokeWidth="2" />
          <path d="M0 9h30v20c0 2-1 3-3 3H3c-2 0-3-1-3-3z" fill="#f1f1f1" />
          <path d="M9 15h5v5H9z" fill="#f25022" />
          <path d="M15 15h5v5h-5z" fill="#7fba00" />
          <path d="M9 21h5v5H9z" fill="#00a4ef" />
          <path d="M15 21h5v5h-5z" fill="#ffb900" />
        </svg>
      </AppButton>
      <AppButton aria-label="Mail">
        <svg width="30" height="28" viewBox="0 0 30 28">
          <path d="M0 9L15 0l15 9v4H0z" fill="#0f5ea8" />
          <path d="M3 9h24v8L15 23 3 17z" fill="#f0f0f0" />
          <path d="M0 9l15 9L30 9v19H0z" fill="#28b2f0" />
          <path d="M0 28l15-10 15 10z" fill="#1490df" />
          <path d="M15 18L30 9v19z" fill="#4cd0fb" />
        </svg>
      </AppButton>
      <AppButton aria-label="Paint">
        <svg width="30" height="30" viewBox="0 0 30 30">
          <path d="M11 4c9-4 16 2 15 11 0 8-8 14-12 12-3-2-2-5-5-6s-5 2-8-1C-1 14 4 6 11 4z" fill="#c9e2f1" />
          <circle cx="10" cy="10" r="2.5" fill="#5cb85c" />
          <circle cx="17" cy="8" r="2.5" fill="#f4b63f" />
          <circle cx="5" cy="15" r="2.5" fill="#e5483d" />
          <circle cx="13" cy="20" r="2.5" fill="#222" />
          <path d="M20 10l3 1-4 18h-3z" fill="#e38a27" />
          <path d="M22 6l7-6-2 9-4 2z" fill="#a9753f" />
        </svg>
      </AppButton>
      <AppButton aria-label="Telegram">
        <svg width="28" height="28">
          <circle cx="14" cy="14" r="14" fill="#229ad6" />
          <FaTelegramPlane x="4" y="6" size={18} color="#fff" />
        </svg>
      </AppButton>
      <AppButton aria-label="Snipping tool">
        <svg width="30" height="30" viewBox="0 0 30 30">
          <ellipse cx="12" cy="13" rx="12" ry="7" fill="#888" transform="rotate(-25 12 13)" />
          <ellipse cx="14" cy="9" rx="12" ry="7" fill="#f7f7f7" stroke="#d8383d" strokeWidth="2" transform="rotate(-25 14 9)" />
          <path d="M13 3l4 16M7 14l16 3" stroke="#777" strokeWidth="1.5" />
          <ellipse cx="18" cy="25" rx="3" ry="4" fill="none" stroke="#1c7fd0" strokeWidth="2" />
          <ellipse cx="25" cy="19" rx="4" ry="3" fill="none" stroke="#1c7fd0" strokeWidth="2" />
        </svg>
      </AppButton>
      <AppButton aria-label="File Explorer" $line="#76b9ed">
        <svg width="28" height="24" viewBox="0 0 28 24">
          <path d="M0 0h11l3 4H0z" fill="#e6a41c" />
          <path d="M0 3h28v20H0z" fill="#fcd462" />
          <path d="M4 12h20v11h-4v-5H8v5H4z" fill="#3a9bea" />
        </svg>
      </AppButton>
      <AppButton aria-label="Chrome" $line="#76b9ed" $bg="#4c4c4c">
        <svg width="28" height="28" viewBox="0 0 28 28">
          <circle cx="14" cy="14" r="14" fill="#fbc116" />
          <path d="M14 14L2 7a14 14 0 0 1 24 0z" fill="#db4437" />
          <path d="M14 14L2 7a14 14 0 0 0 11 21l6-11z" fill="#0f9d58" />
          <circle cx="14" cy="14" r="6.5" fill="#fff" />
          <circle cx="14" cy="14" r="5.2" fill="#4285f4" />
        </svg>
      </AppButton>
      <AppButton aria-label="Brave" $line="#76b9ed">
        <svg width="26" height="30" viewBox="0 0 26 30">
          <path d="M8 0h10l3 3 4 2-1 4 1 3-4 13-8 5-8-5L1 12l1-3-1-4 4-2z" fill="#fb3d1b" />
          <path d="M8 5l5 1 5-1 4 6-3 4 1 4-5 3-2 4-2-4-5-3 1-4-3-4z" fill="#fff" />
          <path d="M7 10l4 1-1 4 3 2 3-2-1-4 4-1M9 20l4-2 4 2M13 7v4" fill="none" stroke="#fb3d1b" strokeWidth="1.4" />
        </svg>
      </AppButton>
      <AppButton aria-label="Telegram chats" $line="#ff7200" $bg="#a35e28">
        <svg width="28" height="28">
          <circle cx="14" cy="14" r="14" fill="#229ad6" />
          <FaTelegramPlane x="4" y="6" size={18} color="#fff" />
        </svg>
        <CountBadge>..05</CountBadge>
      </AppButton>
    </Pinned>
  </>
)

const TaskbarTray = () => (
  <Tray>
    <Weather>
      <svg width="27" height="28" viewBox="0 0 27 28">
        <path d="M6 18C-2 17-1 9 5 8 7-2 20-2 20 7c8 0 8 10 1 11z" fill="#c3e1fa" />
        <path
          d="M8 20c-2 3-3 4-3 5a3 3 0 0 0 5 0c0-1-1-2-2-5zM14 13c-2 3-2 3-2 4a2 2 0 0 0 4 0c0-1-1-1-2-4zM20 16c-2 3-2 3-2 4a2 2 0 0 0 4 0c0-1-1-1-2-4z"
          fill="#4a9cea"
        />
      </svg>
      <span>27°C</span>
      <span>AQI 54</span>
    </Weather>
    <TrayButton aria-label="Show hidden icons">
      <svg width="17" height="9" fill="none" stroke="#fff" strokeWidth="1.5">
        <path d="M1 8l7-7 7 7" />
      </svg>
    </TrayButton>
    <TrayButton aria-label="Meet now">
      <svg width="16" height="20" fill="none" stroke="#fff" strokeWidth="1.2">
        <rect x="1" y="5" width="9" height="10" rx="1" />
        <path d="M10 9l4-3v8l-4-3M3 2c3-2 6-2 9 0M3 18c3 2 6 2 9 0" />
      </svg>
    </TrayButton>
    <TrayButton aria-label="OneDrive">
      <svg width="20" height="14">
        <path d="M4 8C4-1 14-2 15 5l-4 4z" fill="#a9a9a9" />
        <path d="M5 13c-6 0-6-6-1-7 3 0 5 2 7 2 5-5 9-1 9 2 0 2-2 3-4 3z" fill="#fff" />
      </svg>
    </TrayButton>
    <TrayButton aria-label="Battery">
      <svg width="19" height="12" fill="none" stroke="#fff">
        <path d="M.5.5h16v10H.5zM17 4h1.5v4H17" />
        <path d="M3 3h8v5H3z" fill="#fff" />
      </svg>
    </TrayButton>
    <TrayButton aria-label="Network">
      <svg width="17" height="17" fill="none" stroke="#ccc" strokeWidth="1.3">
        <path d="M1 16C1 7 7 1 16 1M5 16c0-7 4-11 11-11M9 16c0-4 3-7 7-7" />
        <circle cx="14" cy="14" r="1.5" fill="#fff" />
      </svg>
    </TrayButton>
    <TrayButton aria-label="Volume">
      <svg width="21" height="18" fill="none" stroke="#fff" strokeWidth="1.2">
        <path d="M1 6h3l4-4v14l-4-4H1zM11 6c2 2 2 4 0 6M14 3c4 4 4 8 0 12M17 1c5 5 5 11 0 16" />
      </svg>
    </TrayButton>
    <Clock>
      3:00 PM
      <br />
      7/28/2021
    </Clock>
    <ActionCenter aria-label="Notifications">
      <svg width="22" height="24" viewBox="0 0 22 24">
        <path d="M0 0h20v17H10l-5 6v-6H0z" fill="#fff" />
        <path d="M4 5h12M4 9h12M4 13h8" stroke="#222" />
      </svg>
      <ActionCount>24</ActionCount>
    </ActionCenter>
    <ShowDesktop aria-label="Show desktop" />
  </Tray>
)

export default function App() {
  return (
    <Page>
      <GlobalStyle />
      <Browser />
      <Workspace>
        <LeftBar>
          <MenuButton aria-label="Menu">
            <svg width="24" height="38" viewBox="0 0 24 38" stroke="#131722" strokeWidth="2.2">
              <path d="M1 10h22M1 18h22M1 26h22" />
              <circle cx="12" cy="35" r="3" fill="#b2b5be" stroke="none" />
            </svg>
            <Badge>4</Badge>
          </MenuButton>
          <ToolButtons items={DRAW_TOOLS} />
          <ToolButtons items={MEASURE_TOOLS} />
          <ToolButtons items={LOCK_TOOLS} />
          <ToolButtons items={{ 'Remove drawings': TRASH }} />
        </LeftBar>
        <Center>
          <Toolbar />
          <Chart />
          <RangeBar>
            <RangeGroup $gap={16} $size={16}>
              {['1D', '5D', '1M', '3M', '6M', 'YTD', '1Y', '5Y', 'All'].map((r) => (
                <button key={r}>{r}</button>
              ))}
              <Divider />
              <button aria-label="Go to date">
                <svg width="22" height="22" fill="none" stroke="#131722" strokeWidth="1.3">
                  <path d="M2 9V5c0-2 1-2 2-2h14c2 0 3 1 3 2v13c0 2-1 3-3 3h-5M2 8h19M6 0v5M16 0v5M0 16h9M5 12l4 4-4 4" />
                </svg>
              </button>
            </RangeGroup>
            <RangeGroup $gap={17} $size={17}>
              <button>09:30:21 (UTC)</button>
              <Divider />
              <button>%</button>
              <button>log</button>
              <button>auto</button>
            </RangeGroup>
          </RangeBar>
          <PanelTabs>
            <PanelTab $w={166} $menu>
              Stock Screener <Chevron />
            </PanelTab>
            <PanelTab $w={124}>Text Notes</PanelTab>
            <PanelTab $w={127}>Pine Editor</PanelTab>
            <PanelTab $w={159}>Strategy Tester</PanelTab>
            <PanelTab $w={161}>
              Paper Trading <OnlineDot />
            </PanelTab>
            <PanelActions>
              <button aria-label="Open panel">
                <svg width="22" height="11" fill="none" stroke="#131722" strokeWidth="1.3">
                  <path d="M1 10l10-9 10 9" />
                </svg>
              </button>
              <button aria-label="Maximize panel">
                <svg width="24" height="21" fill="none" stroke="#131722" strokeWidth="1.3">
                  <rect x="1" y="1" width="22" height="19" rx="2" />
                  <path d="M1 5h22" />
                </svg>
              </button>
            </PanelActions>
          </PanelTabs>
        </Center>
        <RightBar>
          <SideButtons items={SIDE_TOP} pad="0 0 11px" />
          <SideButtons items={SIDE_MIDDLE} pad="8px 0 10px" />
          <SideButtons items={SIDE_BOTTOM} pad="9px 0" />
        </RightBar>
      </Workspace>
      <Taskbar>
        <TaskbarApps />
        <TaskbarTray />
      </Taskbar>
    </Page>
  )
}
